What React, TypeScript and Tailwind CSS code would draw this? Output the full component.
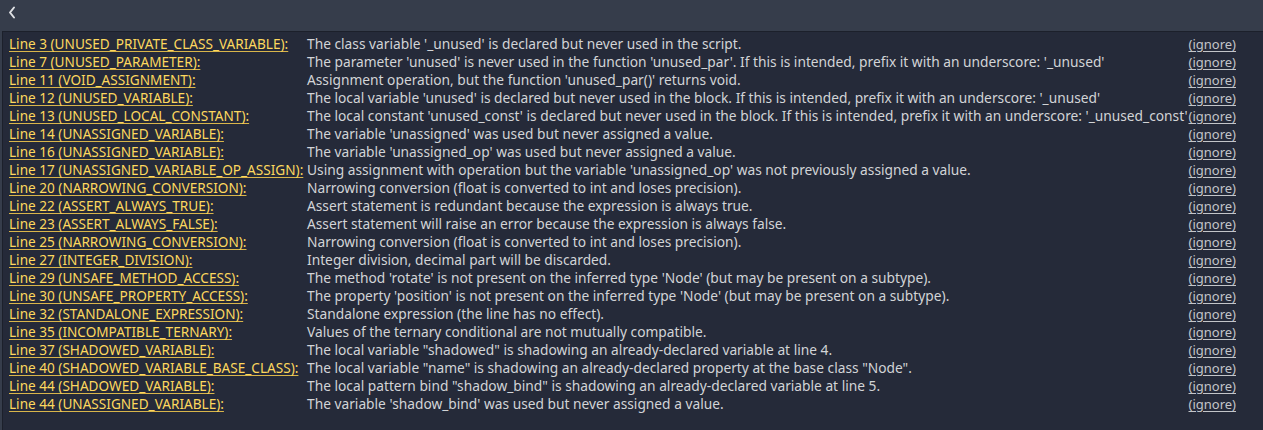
import React from 'react';

const rows: [string, string][] = [
  ['Line 3 (UNUSED_PRIVATE_CLASS_VARIABLE):', "The class variable '_unused' is declared but never used in the script."],
  ['Line 7 (UNUSED_PARAMETER):', "The parameter 'unused' is never used in the function 'unused_par'. If this is intended, prefix it with an underscore: '_unused'"],
  ['Line 11 (VOID_ASSIGNMENT):', "Assignment operation, but the function 'unused_par()' returns void."],
  ['Line 12 (UNUSED_VARIABLE):', "The local variable 'unused' is declared but never used in the block. If this is intended, prefix it with an underscore: '_unused'"],
  ['Line 13 (UNUSED_LOCAL_CONSTANT):', "The local constant 'unused_const' is declared but never used in the block. If this is intended, prefix it with an underscore: '_unused_const'"],
  ['Line 14 (UNASSIGNED_VARIABLE):', "The variable 'unassigned' was used but never assigned a value."],
  ['Line 16 (UNASSIGNED_VARIABLE):', "The variable 'unassigned_op' was used but never assigned a value."],
  ['Line 17 (UNASSIGNED_VARIABLE_OP_ASSIGN):', "Using assignment with operation but the variable 'unassigned_op' was not previously assigned a value."],
  ['Line 20 (NARROWING_CONVERSION):', 'Narrowing conversion (float is converted to int and loses precision).'],
  ['Line 22 (ASSERT_ALWAYS_TRUE):', 'Assert statement is redundant because the expression is always true.'],
  ['Line 23 (ASSERT_ALWAYS_FALSE):', 'Assert statement will raise an error because the expression is always false.'],
  ['Line 25 (NARROWING_CONVERSION):', 'Narrowing conversion (float is converted to int and loses precision).'],
  ['Line 27 (INTEGER_DIVISION):', 'Integer division, decimal part will be discarded.'],
  ['Line 29 (UNSAFE_METHOD_ACCESS):', "The method 'rotate' is not present on the inferred type 'Node' (but may be present on a subtype)."],
  ['Line 30 (UNSAFE_PROPERTY_ACCESS):', "The property 'position' is not present on the inferred type 'Node' (but may be present on a subtype)."],
  ['Line 32 (STANDALONE_EXPRESSION):', 'Standalone expression (the line has no effect).'],
  ['Line 35 (INCOMPATIBLE_TERNARY):', 'Values of the ternary conditional are not mutually compatible.'],
  ['Line 37 (SHADOWED_VARIABLE):', 'The local variable "shadowed" is shadowing an already-declared variable at line 4.'],
  ['Line 40 (SHADOWED_VARIABLE_BASE_CLASS):', 'The local variable "name" is shadowing an already-declared property at the base class "Node".'],
  ['Line 44 (SHADOWED_VARIABLE):', 'The local pattern bind "shadow_bind" is shadowing an already-declared variable at line 5.'],
  ['Line 44 (UNASSIGNED_VARIABLE):', "The variable 'shadow_bind' was used but never assigned a value."],
];

export default function App() {
  return (
    <div className="w-[1263px] h-[430px] bg-[#363d4b] flex flex-col overflow-hidden" style={{ fontFamily: '"Noto Sans", sans-serif' }}>
      {/* toolbar */}
      <div className="h-[31px] shrink-0 flex items-start pl-[8px] pt-[5px]">
        <svg width="8" height="13" viewBox="0 0 8 13" className="mt-[1px]">
          <path d="M6 1.5 L2 6.5 L6 11.5" fill="none" stroke="#dfe1e4" strokeWidth="2" strokeLinecap="round" strokeLinejoin="round" />
        </svg>
      </div>

      {/* warnings panel */}
      <div className="flex-1 ml-[2px] bg-[#252a39] border-l border-t border-[#1c202b] pl-[6px] pr-[27px] pt-[3px]">
        <div className="grid grid-cols-[298px_1fr_auto] leading-[18px]">
          {rows.map(([label, msg], i) => (
            <React.Fragment key={i}>
              <span className="text-[13.6px] text-[#fdd85e] underline decoration-[#d9b54a] underline-offset-[2px] whitespace-nowrap">{label}</span>
              <span className="text-[13.75px] text-[#d2d4d7] whitespace-nowrap">{msg}</span>
              <span className="text-[13px] text-[#c3c5c9] underline underline-offset-[2px] whitespace-nowrap text-right">(ignore)</span>
            </React.Fragment>
          ))}
        </div>
      </div>
    </div>
  );
}
